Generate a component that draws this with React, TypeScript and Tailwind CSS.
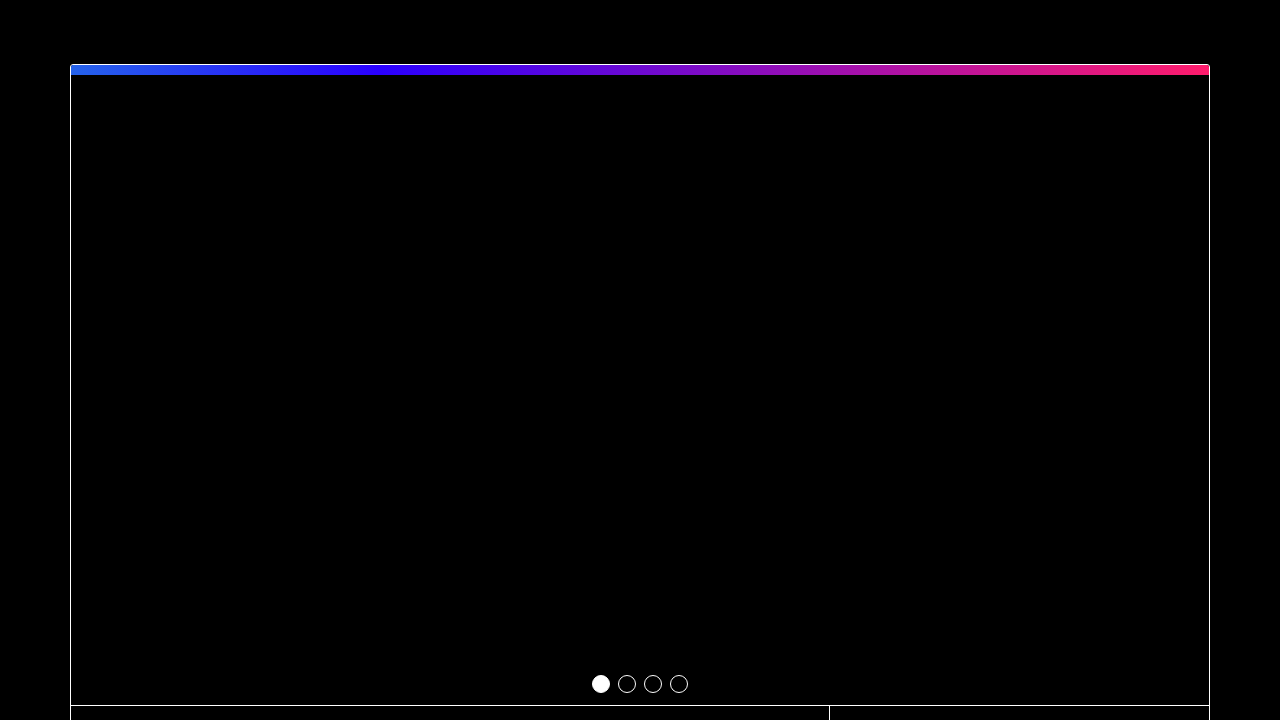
import React from "react";

export default function App() {
  const slides = [0, 1, 2, 3];
  const active = 0;
  return (
    <div className="min-h-screen bg-black pt-16" style={{ fontFamily: '"Liberation Sans", Arial, sans-serif' }}>
      <div className="mx-auto w-[1140px] border border-white rounded-t-[3px] overflow-hidden">
        <div className="h-[10px] bg-[linear-gradient(to_right,#2563eb_0%,#2a00ff_27%,#ff1c6c_100%)]" />
        <div className="h-[630px] flex items-end justify-center pb-3">
          <div className="flex gap-2">
            {slides.map((i) => (
              <button
                key={i}
                aria-label={`Slide ${i + 1}`}
                className={
                  i === active
                    ? "w-[18px] h-[18px] rounded-full bg-white border border-white"
                    : "w-[18px] h-[18px] rounded-full bg-transparent border border-white"
                }
              />
            ))}
          </div>
        </div>
        <div className="grid grid-cols-[759px_1fr] border-t border-white">
          <div className="h-40 border-r border-white" />
          <div className="h-40" />
        </div>
      </div>
    </div>
  );
}
